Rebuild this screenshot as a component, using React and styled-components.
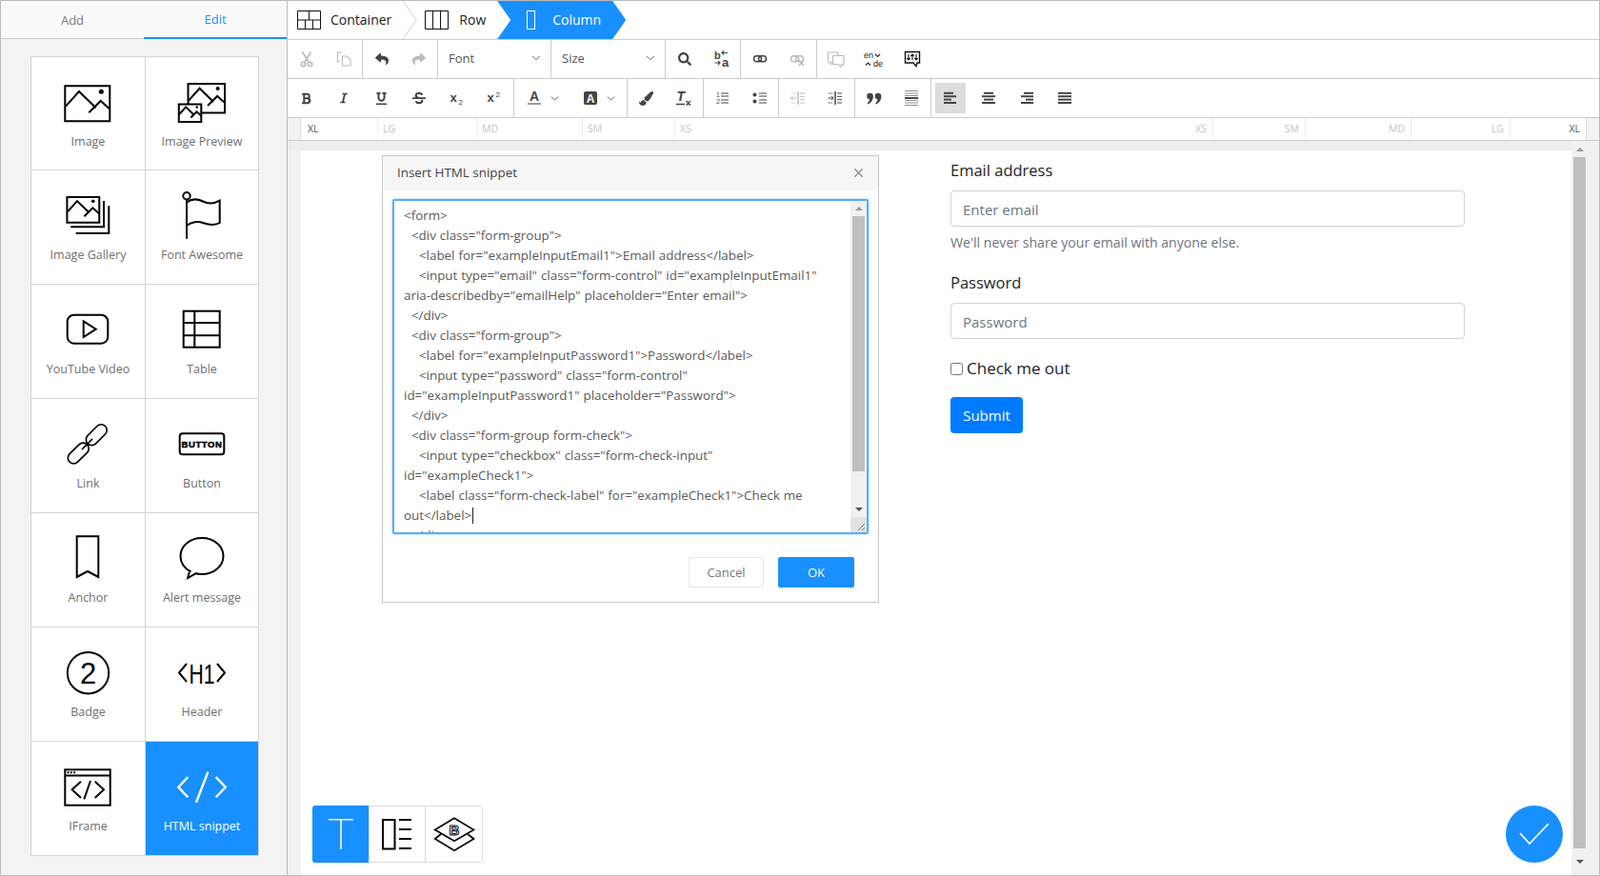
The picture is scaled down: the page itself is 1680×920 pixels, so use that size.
import React from 'react'
import styled, { createGlobalStyle } from 'styled-components'
import {
    FaBold, FaItalic, FaUnderline, FaStrikethrough,
    FaPaintBrush, FaReply, FaShare, FaSearch
} from 'react-icons/fa'
import { ChevronDown, X } from 'lucide-react'

const FONT = '"Open Sans", "Noto Sans", "Liberation Sans", sans-serif'
const BLUE = '#1890ff'

const GlobalStyle = createGlobalStyle`
    html, body { margin: 0; padding: 0; background: #fff; }
    * { box-sizing: border-box; }
    body { font-family: ${FONT}; color: #333; }
`

/* ---------- sidebar icons, 60x60 ---------- */

const Glyph = ({ children, color = '#000', width = 2 }) => (
    <svg width="60" height="60" viewBox="0 0 60 60" fill="none" stroke={color} strokeWidth={width}>
        {children}
    </svg>
)

// picture with mountains, drawn in a 49x39 box so it can be scaled for the other image icons
const Picture = ({ x, y, s }) => (
    <g transform={`translate(${x} ${y}) scale(${s})`}>
        <rect x="1" y="1" width="47" height="37" fill="#fff" stroke="#000" strokeWidth="2" vectorEffect="non-scaling-stroke" />
        <path d="M1.7 22.4 L15.7 6.7 L33.4 24 M26 29 L38.4 16.7 L48.4 25.7" stroke="#000" strokeWidth="2" vectorEffect="non-scaling-stroke" />
        <circle cx="39" cy="7" r="2.5" fill="#000" stroke="none" />
    </g>
)

const icons = {
    image: <Glyph><Picture x={6.3} y={11.3} s={1} /></Glyph>,
    preview: <Glyph><Picture x={14.7} y={9.3} s={0.82} /><Picture x={5.3} y={31} s={0.5} /></Glyph>,
    gallery: (
        <Glyph>
            <path d="M13.3 41.3H48V14M18.7 48H53.3V19.3" />
            <Picture x={8.7} y={9.3} s={0.72} />
        </Glyph>
    ),
    flag: (
        <Glyph>
            <circle cx="14" cy="8.7" r="3.7" />
            <path d="M14 12.7V53.7M14 15.5C20 11 26 12 31 14.5S43 17 48.7 13.7V37C43 40.5 37 39 31 37S20 36 14 40" />
        </Glyph>
    ),
    youtube: (
        <Glyph>
            <rect x="9.7" y="13.7" width="42.6" height="30" rx="7" />
            <path d="M26.7 20.3L39.7 28.7L26.7 37Z" />
        </Glyph>
    ),
    table: (
        <Glyph>
            <rect x="10.7" y="9.7" width="38" height="38" />
            <path d="M22.3 9.7V47.7M10.7 22H48.7M10.7 35.3H48.7" />
        </Glyph>
    ),
    link: (
        <Glyph width={1.7}>
            <rect x="27.3" y="13.7" width="26" height="12" rx="6" transform="rotate(-45 40.3 19.7)" />
            <rect x="8.3" y="33" width="26" height="12" rx="6" transform="rotate(-45 21.3 39)" />
            <path d="M25 35L36 24" />
        </Glyph>
    ),
    button: (
        <Glyph>
            <rect x="6.7" y="18.3" width="46.6" height="22" rx="3" />
            <text x="30" y="33" textAnchor="middle" fontFamily="'Liberation Sans', sans-serif" fontSize="9.5" fontWeight="700" letterSpacing="0.6" fill="#000" stroke="#000" strokeWidth="0.5">BUTTON</text>
        </Glyph>
    ),
    anchor: <Glyph><path d="M19.7 6.3H42.3V49L31 43L19.7 49Z" /></Glyph>,
    alert: (
        <Glyph>
            <path d="M18.5 43.5C11.8 40 7.5 34 7.5 27C7.5 16.5 17.5 8 30 8S52.5 16.5 52.5 27S42.5 46 30 46C27.8 46 25.8 45.8 23.8 45.2L15.2 50L16.6 44" />
        </Glyph>
    ),
    badge: (
        <Glyph>
            <circle cx="31.5" cy="29.7" r="21.7" />
            <text x="31.5" y="41" textAnchor="middle" fontFamily="'Liberation Sans', sans-serif" fontSize="31" fill="#000" stroke="none">2</text>
        </Glyph>
    ),
    header: (
        <Glyph>
            <path d="M14 20L6 29.5L14 39M46 20L54 29.5L46 39" />
            <text x="30" y="40.5" textAnchor="middle" fontFamily="'Liberation Sans', sans-serif" fontSize="30" textLength="27" lengthAdjust="spacingAndGlyphs" fill="#000" stroke="none">H1</text>
        </Glyph>
    ),
    iframe: (
        <Glyph>
            <rect x="7.3" y="11.3" width="47.4" height="37.4" />
            <path d="M7.3 17.5H54.7M24 23.7L14.7 32.3L24 41M34 23L27.3 42.3M38.7 23.7L48 32.3L38.7 41" />
            <path d="M9.5 14.3H11.5M12.8 14.3H14.8M16.1 14.3H18.1" />
        </Glyph>
    ),
    snippet: (
        <Glyph color="#fff" width={2.4}>
            <path d="M15.3 19L5.3 29.7L15.3 40.3M36.3 13.7L24 45.7M44.7 19L54.7 29.7L44.7 40.3" />
        </Glyph>
    )
}

const blocks = [
    ['Image', 'image'], ['Image Preview', 'preview'],
    ['Image Gallery', 'gallery'], ['Font Awesome', 'flag'],
    ['YouTube Video', 'youtube'], ['Table', 'table'],
    ['Link', 'link'], ['Button', 'button'],
    ['Anchor', 'anchor'], ['Alert message', 'alert'],
    ['Badge', 'badge'], ['Header', 'header'],
    ['IFrame', 'iframe'], ['HTML snippet', 'snippet']
]

/* ---------- toolbar icons, 20x20 ---------- */

const Tool = ({ children, fill = 'none', stroke = 'currentColor', width = 1.4 }) => (
    <svg width="20" height="20" viewBox="0 0 20 20" fill={fill} stroke={stroke} strokeWidth={width}>{children}</svg>
)

const smallText = { fontFamily: "'Liberation Sans', sans-serif", fill: 'currentColor', stroke: 'none' }

const CutIcon = () => (
    <Tool width={1.6}>
        <path d="M5.5 2.5L12 13M14.5 2.5L8 13" />
        <circle cx="6.5" cy="15.5" r="2.2" /><circle cx="13.5" cy="15.5" r="2.2" />
    </Tool>
)
const CopyIcon = () => (
    <Tool width={1.1}>
        <path d="M6 12.5H3.5V3H8M8.5 7H13L17 10.5V17H8.5Z" />
    </Tool>
)
const ReplaceIcon = () => (
    <Tool width={1.1}>
        <text x="2" y="9.5" fontSize="11" fontWeight="700" style={smallText}>b</text>
        <text x="10" y="18" fontSize="13" fontWeight="700" style={smallText}>a</text>
        <path d="M10 3.5H16M12 1.5L10 3.5L12 5.5M2.5 14H8M6 12L8 14L6 16" />
    </Tool>
)
const LinkIcon = ({ off }) => (
    <Tool width={1.5}>
        <rect x="3.5" y="6.8" width="8" height="6" rx="3" />
        <rect x="8.5" y="6.8" width="8" height="6" rx="3" />
        {off && <path d="M12 11L17 17M17 11L12 17" />}
    </Tool>
)
const CommentsIcon = () => (
    <Tool width={1.1}>
        <path d="M7 13H5L4.5 15.5L3 13H1.5V3H12V6.5" />
        <path d="M6.5 6.5H18V15.5H15.5L15 18.5L12.5 15.5H6.5Z" />
    </Tool>
)
const TranslateIcon = () => (
    <svg width="24" height="20" viewBox="0 0 24 20" fill="none" stroke="#222" strokeWidth="1.1">
        <text x="1" y="9" fontSize="9" fill="#222" stroke="none" fontFamily="'Liberation Sans', sans-serif">en</text>
        <text x="11" y="17.5" fontSize="9" fill="#222" stroke="none" fontFamily="'Liberation Sans', sans-serif">de</text>
        <path d="M13 5L15.5 7.5L18 5M3 16.5L5.5 14L8 16.5" />
    </svg>
)
const WidgetIcon = () => (
    <Tool stroke="#111" width={1.4}>
        <path d="M2.5 2.5H17.5V14H15L14 17.5L11 14H2.5Z" />
        <path d="M6 5V11M4.3 9.2L6 11L7.7 9.2M10 11V5M8.3 6.8L10 5L11.7 6.8M14 5V11M12.3 9.2L14 11L15.7 9.2" strokeWidth="1.1" />
    </Tool>
)
const ScriptIcon = ({ up }) => (
    <Tool>
        <text x="2.5" y="14" fontSize="13" fontWeight="700" style={smallText}>x</text>
        <text x="11.5" y={up ? 9 : 17} fontSize="8" style={smallText}>2</text>
    </Tool>
)
const FontColorIcon = () => (
    <Tool>
        <text x="10" y="13" textAnchor="middle" fontSize="14" fontWeight="700" style={smallText}>A</text>
        <rect x="3" y="15" width="14" height="2" fill="#999" stroke="none" />
    </Tool>
)
const BackColorIcon = () => (
    <svg width="20" height="20" viewBox="0 0 20 20">
        <rect x="3" y="3" width="14" height="14" rx="2" fill="currentColor" />
        <text x="10" y="15" textAnchor="middle" fontSize="12" fontWeight="700" fontFamily="'Liberation Sans', sans-serif" fill="#fff">A</text>
    </svg>
)
const ClearIcon = () => (
    <Tool>
        <text x="2.5" y="13" fontSize="14" fontWeight="700" fontStyle="italic" style={smallText}>T</text>
        <path d="M2 16.5H11M12.5 13L17 17.5M17 13L12.5 17.5" />
    </Tool>
)
const OlIcon = () => (
    <Tool width={1}>
        <text x="3" y="9" fontSize="7" style={smallText}>1</text>
        <text x="3" y="16" fontSize="7" style={smallText}>2</text>
        <path d="M8 5H16M8 8H16M8 12H16M8 15H16" />
    </Tool>
)
const UlIcon = () => (
    <Tool width={1}>
        <circle cx="4.5" cy="6.5" r="2" fill="currentColor" stroke="none" />
        <circle cx="4.5" cy="13.5" r="2" fill="currentColor" stroke="none" />
        <path d="M9 5H17M9 8H17M9 12H17M9 15H17" />
    </Tool>
)
const IndentIcon = ({ flip }) => (
    <Tool width={1}>
        <path d={flip ? 'M8 10H2.5M4.5 8L2.5 10L4.5 12' : 'M2.5 10H8M6 8L8 10L6 12'} />
        <path d="M3 5H7M3 15H7" strokeDasharray="1.5 1" />
        <path d="M10 3V17" strokeWidth="1.5" />
        <path d="M12 5H17M12 8.3H17M12 11.7H17M12 15H17" />
    </Tool>
)
const QuoteIcon = () => (
    <svg width="20" height="20" viewBox="0 0 20 20" fill="currentColor">
        {[5.5, 14].map(cx => (
            <g key={cx}>
                <circle cx={cx} cy="8" r="3.3" />
                <path d={`M${cx + 3.3} 8C${cx + 3.3} 12 ${cx + 1} 15.5 ${cx - 2.5} 16.5L${cx - 2.8} 15.2C${cx - 1} 14 ${cx - 0.5} 12 ${cx - 0.5} 10Z`} />
            </g>
        ))}
    </svg>
)
const RuleIcon = () => (
    <Tool width={1}>
        <path d="M3 2.5H17M3 5H17M3 7.5H17M3 12.5H17M3 15H17M3 17.5H17" opacity="0.6" />
        <path d="M3 10H17" strokeWidth="2" />
    </Tool>
)
const AlignIcon = ({ lines }) => (
    <svg width="20" height="20" viewBox="0 0 20 20" fill="currentColor">
        {lines.map(([x, w], i) => <rect key={i} x={x} y={3.8 + i * 3.4} width={w} height="2" />)}
    </svg>
)

/* ---------- layout ---------- */

const Page = styled.div`
    width: 1680px;
    height: 920px;
    border: 1px solid #bbb;
    display: flex;
    overflow: hidden;
    background: #fff;
`

const Sidebar = styled.aside`
    width: 301px;
    flex: none;
    border-right: 1px solid #bbb;
    background: #f3f3f3;
`

const SideTabs = styled.div`
    display: flex;
    height: 40px;
    background: #f9f9f9;
    border-bottom: 1px solid #ccc;
`

const SideTab = styled.div`
    flex: 1;
    display: flex;
    align-items: center;
    justify-content: center;
    font-size: 13px;
    color: ${p => (p.$active ? BLUE : '#777')};
    height: ${p => (p.$active ? '40px' : '39px')};
    border-bottom: ${p => (p.$active ? `2px solid ${BLUE}` : 'none')};
`

const BlockGrid = styled.div`
    display: grid;
    grid-template-columns: 120px 119px;
    grid-template-rows: 119px repeat(6, 120px);
    width: 240px;
    margin: 18px 0 0 31px;
    border-top: 1px solid #d4d4d4;
    border-left: 1px solid #d4d4d4;
    background: #fff;
`

const BlockCell = styled.div`
    display: flex;
    flex-direction: column;
    align-items: center;
    padding-top: 18px;
    border-right: 1px solid #d4d4d4;
    border-bottom: 1px solid #d4d4d4;
    background: ${p => (p.$active ? BLUE : '#fff')};
    svg { display: block; flex: none; }
    &:nth-child(odd) svg { margin-left: -3px; }
`

const BlockLabel = styled.span`
    margin-top: 2px;
    font-size: 12.5px;
    line-height: 18px;
    color: ${p => (p.$active ? '#fff' : '#6f6f6f')};
`

const Main = styled.main`
    flex: 1;
    min-width: 0;
    display: flex;
    flex-direction: column;
`

const Breadcrumbs = styled.nav`
    height: 41px;
    flex: none;
    display: flex;
    align-items: center;
    padding-left: 10px;
    border-bottom: 1px solid #ccc;
`

const CrumbText = styled.span`
    font-size: 14px;
    line-height: 40px;
    margin-left: ${p => p.$gap}px;
    color: ${p => (p.$light ? '#fff' : '#222')};
`

const CrumbArrow = styled.svg`
    flex: none;
    margin: 0 8px 0 11px;
`

const ActiveCrumb = styled.div`
    width: 135px;
    height: 40px;
    margin-left: 12px;
    padding-left: 31px;
    display: flex;
    align-items: center;
    background: ${BLUE};
    clip-path: polygon(0 0, 121px 0, 135px 50%, 121px 100%, 0 100%, 14px 50%);
`

const ToolRow = styled.div`
    height: 41px;
    flex: none;
    display: flex;
    border-bottom: 1px solid #ccc;
`

const ToolGroup = styled.div`
    width: ${p => p.$w}px;
    flex: none;
    display: flex;
    align-items: center;
    border-right: ${p => (p.$open ? 'none' : '1px solid #ccc')};
`

const ToolButton = styled.div`
    flex: 1;
    height: 40px;
    display: flex;
    align-items: center;
    justify-content: center;
    gap: 5px;
    color: ${p => (p.$off ? '#bbb' : '#444')};
    font-size: 14px;
`

const ActiveBox = styled.div`
    width: 32px;
    height: 32px;
    display: flex;
    align-items: center;
    justify-content: center;
    background: #ddd;
    color: #444;
`

const SelectBox = styled.div`
    flex: 1;
    height: 40px;
    display: flex;
    align-items: center;
    justify-content: space-between;
    padding: 0 8px 2px 11px;
    font-size: 13px;
    color: #555;
`

const Ruler = styled.div`
    height: 24px;
    flex: none;
    display: flex;
    background: #fff;
    border-bottom: 1px solid #ccc;
`

const RulerGutter = styled.div`
    width: ${p => p.$w}px;
    flex: none;
    background: #f3f3f3;
    border-left: ${p => (p.$right ? '1px solid #ddd' : 'none')};
    border-right: ${p => (p.$right ? 'none' : '1px solid #ddd')};
`

const RulerMark = styled.div`
    width: ${p => p.$w}px;
    flex: ${p => (p.$w ? 'none' : '1')};
    padding: ${p => (p.$end ? '0 6px' : `0 5px 0 ${p.$dark ? 7 : 5}px`)};
    font-size: 10.5px;
    line-height: 23px;
    text-align: ${p => (p.$end ? 'right' : 'left')};
    color: ${p => (p.$dark ? '#555' : '#c4c4c4')};
    border-right: ${p => (p.$end || p.$plain ? 'none' : '1px solid #eee')};
    border-left: ${p => (p.$end && !p.$plain ? '1px solid #eee' : 'none')};
`

const TopStrip = styled.div`
    height: 10px;
    flex: none;
    background: #eee;
`

const Workspace = styled.div`
    flex: 1;
    min-height: 0;
    display: flex;
`

const Gutter = styled.div`
    width: 14px;
    flex: none;
    background: #f1f1f1;
`

const Canvas = styled.div`
    flex: 1;
    min-width: 0;
    position: relative;
    padding: 9px 0 0 682px;
    background: #fff;
`

const Track = styled.div`
    width: ${p => p.$w}px;
    flex: none;
    margin-top: -10px;
    display: flex;
    flex-direction: column;
    background: #f1f1f1;
    padding-left: 2px;
`

const Thumb = styled.div`
    width: ${p => p.$w}px;
    flex: 1;
    background: #bfbfbf;
`

const ArrowCap = styled.div`
    width: ${p => p.$w}px;
    height: ${p => p.$h}px;
    flex: none;
    display: flex;
    align-items: center;
    justify-content: center;
    &::after {
        content: '';
        border-left: 4px solid transparent;
        border-right: 4px solid transparent;
        ${p => (p.$down ? 'border-top: 4px solid #555;' : 'border-bottom: 4px solid #999;')}
    }
`

const FormColumn = styled.form`
    width: 540px;
`

const FieldLabel = styled.label`
    display: block;
    font-size: 16.5px;
    line-height: 24px;
    margin-bottom: 9px;
    color: #212529;
`

const FieldInput = styled.input`
    display: block;
    width: 100%;
    height: 38px;
    padding: 1px 12px 0;
    border: 1px solid #ced4da;
    border-radius: 4px;
    font: 15px ${FONT};
    outline: none;
    &::placeholder { color: #6c757d; opacity: 1; }
`

const FieldHelp = styled.small`
    display: block;
    font-size: 14.1px;
    line-height: 20px;
    margin-top: 7px;
    color: #6c757d;
`

const FieldGroup = styled.div`
    margin-bottom: ${p => p.$mb}px;
`

const CheckRow = styled.label`
    display: flex;
    align-items: center;
    gap: 4px;
    font-size: 17px;
    line-height: 24px;
    margin-bottom: 18px;
    color: #212529;
    input { width: 13px; height: 13px; margin: 0; accent-color: #007bff; }
`

const SubmitButton = styled.button`
    width: 76px;
    height: 38px;
    padding: 0;
    border: none;
    border-radius: 4px;
    background: #007bff;
    color: #fff;
    font: 15px ${FONT};
`

/* things that lie over the canvas */

const Dialog = styled.div`
    position: absolute;
    left: 85px;
    top: 5px;
    width: 522px;
    height: 470px;
    background: #fff;
    border: 1px solid #c8c8c8;
`

const DialogHead = styled.div`
    height: 36px;
    display: flex;
    align-items: center;
    justify-content: space-between;
    padding: 0 13px 2px 15px;
    background: #f6f6f6;
    font-size: 13.4px;
    color: #444;
`

const CodeBox = styled.div`
    display: flex;
    height: 352px;
    margin: 9px 10px 0 10px;
    border: 2px solid #5aadf8;
    border-radius: 2px;
    box-shadow: 0 0 3px rgba(24, 144, 255, 0.45);
    overflow: hidden;
`

const CodeText = styled.div`
    flex: 1;
    min-width: 0;
    padding: 5px 0 0 10px;
    white-space: pre;
    font-size: 13.4px;
    word-spacing: 0.5px;
    line-height: 21px;
    color: #5a5a5a;
`

const Caret = styled.span`
    display: inline-block;
    width: 1px;
    height: 17px;
    margin-left: 1px;
    vertical-align: -4px;
    background: #222;
`

const CodeScroll = styled.div`
    width: 17px;
    flex: none;
    display: flex;
    flex-direction: column;
    background: #f1f1f1;
    padding-left: 2px;
`

const CodeThumb = styled.div`
    width: 13px;
    height: 268px;
    flex: none;
    background: #bfbfbf;
`

const CodeSpacer = styled.div`
    flex: 1;
`

const Grip = styled.svg`
    display: block;
    margin-left: -2px;
    flex: none;
    background: #e2e2e2;
`

const DialogFoot = styled.div`
    display: flex;
    justify-content: flex-end;
    gap: 15px;
    padding: 24px 25px 0 0;
`

const DialogButton = styled.div`
    width: ${p => p.$w}px;
    height: 32px;
    display: flex;
    align-items: center;
    justify-content: center;
    font-size: 13px;
    border-radius: 2px;
    border: 1px solid ${p => (p.$primary ? BLUE : '#e6e6e6')};
    background: ${p => (p.$primary ? BLUE : '#fff')};
    color: ${p => (p.$primary ? '#fff' : '#777')};
`

const ModeTabs = styled.div`
    position: absolute;
    left: 12px;
    bottom: 13px;
    display: flex;
    height: 60px;
    border: 1px solid #ddd;
    border-radius: 3px;
    background: #fff;
`

const ModeTab = styled.div`
    width: ${p => p.$w}px;
    display: flex;
    align-items: center;
    justify-content: center;
    background: ${p => (p.$active ? BLUE : '#fff')};
    border-right: ${p => (p.$last ? 'none' : '1px solid #ddd')};
    border-radius: ${p => (p.$active ? '3px 0 0 3px' : '0')};
    margin: ${p => (p.$active ? '-1px 0 -1px -1px' : '0')};
`

const DoneButton = styled.div`
    position: absolute;
    right: 9px;
    bottom: 13px;
    width: 60px;
    height: 60px;
    border-radius: 50%;
    background: ${BLUE};
    display: flex;
    align-items: center;
    justify-content: center;
`

const codeLines = [
    '<form>',
    '  <div class="form-group">',
    '    <label for="exampleInputEmail1">Email address</label>',
    '    <input type="email" class="form-control" id="exampleInputEmail1"',
    'aria-describedby="emailHelp" placeholder="Enter email">',
    '  </div>',
    '  <div class="form-group">',
    '    <label for="exampleInputPassword1">Password</label>',
    '    <input type="password" class="form-control"',
    'id="exampleInputPassword1" placeholder="Password">',
    '  </div>',
    '  <div class="form-group form-check">',
    '    <input type="checkbox" class="form-check-input"',
    'id="exampleCheck1">',
    '    <label class="form-check-label" for="exampleCheck1">Check me',
    'out</label>',
    '  </div>'
]

const rulerLeft = [['XL', 81, true], ['LG', 104], ['MD', 111], ['SM', 97]]
const rulerRight = [['SM', 97], ['MD', 111], ['LG', 104], ['XL', 80, true]]

function App() {
    return (
        <Page>
            <GlobalStyle />
            <Sidebar>
                <SideTabs>
                    <SideTab>Add</SideTab>
                    <SideTab $active>Edit</SideTab>
                </SideTabs>
                <BlockGrid>
                    {blocks.map(([label, icon]) => (
                        <BlockCell key={label} $active={icon === 'snippet'}>
                            {icons[icon]}
                            <BlockLabel $active={icon === 'snippet'}>{label}</BlockLabel>
                        </BlockCell>
                    ))}
                </BlockGrid>
            </Sidebar>
            <Main>
                <Breadcrumbs>
                    <svg width="25" height="20" viewBox="0 0 25 20" fill="none" stroke="#111">
                        <path d="M.5.5H24.5V19.5H.5ZM.5 10H24.5M12.5.5V10M8.5 10V19.5M16.5 10V19.5" />
                    </svg>
                    <CrumbText $gap={10}>Container</CrumbText>
                    <CrumbArrow width="16" height="40" viewBox="0 0 16 40" fill="none" stroke="#d0d0d0">
                        <path d="M1 0L15 20L1 40" />
                    </CrumbArrow>
                    <svg width="25" height="20" viewBox="0 0 25 20" fill="none" stroke="#111">
                        <path d="M.5.5H24.5V19.5H.5ZM8.5.5V19.5M16.5.5V19.5" />
                    </svg>
                    <CrumbText $gap={11}>Row</CrumbText>
                    <ActiveCrumb>
                        <svg width="9" height="20" viewBox="0 0 9 20" fill="none" stroke="#fff">
                            <rect x=".5" y=".5" width="8" height="19" />
                        </svg>
                        <CrumbText $gap={18} $light>Column</CrumbText>
                    </ActiveCrumb>
                </Breadcrumbs>

                <ToolRow>
                    <ToolGroup $w={79}>
                        <ToolButton $off><CutIcon /></ToolButton>
                        <ToolButton $off><CopyIcon /></ToolButton>
                    </ToolGroup>
                    <ToolGroup $w={79}>
                        <ToolButton><FaReply size={14} /></ToolButton>
                        <ToolButton $off><FaShare size={14} /></ToolButton>
                    </ToolGroup>
                    <ToolGroup $w={119}>
                        <SelectBox>Font<ChevronDown size={14} strokeWidth={1.6} /></SelectBox>
                    </ToolGroup>
                    <ToolGroup $w={120}>
                        <SelectBox>Size<ChevronDown size={14} strokeWidth={1.6} /></SelectBox>
                    </ToolGroup>
                    <ToolGroup $w={79}>
                        <ToolButton><FaSearch size={14} /></ToolButton>
                        <ToolButton><ReplaceIcon /></ToolButton>
                    </ToolGroup>
                    <ToolGroup $w={80}>
                        <ToolButton><LinkIcon /></ToolButton>
                        <ToolButton $off><LinkIcon off /></ToolButton>
                    </ToolGroup>
                    <ToolGroup $w={120} $open>
                        <ToolButton $off><CommentsIcon /></ToolButton>
                        <ToolButton><TranslateIcon /></ToolButton>
                        <ToolButton><WidgetIcon /></ToolButton>
                    </ToolGroup>
                </ToolRow>

                <ToolRow>
                    <ToolGroup $w={238}>
                        <ToolButton><FaBold size={13} /></ToolButton>
                        <ToolButton><FaItalic size={12} /></ToolButton>
                        <ToolButton><FaUnderline size={13} /></ToolButton>
                        <ToolButton><FaStrikethrough size={14} /></ToolButton>
                        <ToolButton><ScriptIcon /></ToolButton>
                        <ToolButton><ScriptIcon up /></ToolButton>
                    </ToolGroup>
                    <ToolGroup $w={119}>
                        <ToolButton><FontColorIcon /><ChevronDown size={13} strokeWidth={1.6} /></ToolButton>
                        <ToolButton><BackColorIcon /><ChevronDown size={13} strokeWidth={1.6} /></ToolButton>
                    </ToolGroup>
                    <ToolGroup $w={80}>
                        <ToolButton><FaPaintBrush size={15} /></ToolButton>
                        <ToolButton><ClearIcon /></ToolButton>
                    </ToolGroup>
                    <ToolGroup $w={79}>
                        <ToolButton><OlIcon /></ToolButton>
                        <ToolButton><UlIcon /></ToolButton>
                    </ToolGroup>
                    <ToolGroup $w={80}>
                        <ToolButton $off><IndentIcon flip /></ToolButton>
                        <ToolButton><IndentIcon /></ToolButton>
                    </ToolGroup>
                    <ToolGroup $w={80}>
                        <ToolButton><QuoteIcon /></ToolButton>
                        <ToolButton><RuleIcon /></ToolButton>
                    </ToolGroup>
                    <ToolGroup $w={160} $open>
                        <ToolButton><ActiveBox><AlignIcon lines={[[3, 10], [3, 13], [3, 8], [3, 13]]} /></ActiveBox></ToolButton>
                        <ToolButton><AlignIcon lines={[[5, 10], [3, 14], [5, 10], [3, 14]]} /></ToolButton>
                        <ToolButton><AlignIcon lines={[[7, 10], [4, 13], [9, 8], [4, 13]]} /></ToolButton>
                        <ToolButton><AlignIcon lines={[[3, 14], [3, 14], [3, 14], [3, 14]]} /></ToolButton>
                    </ToolGroup>
                </ToolRow>

                <Ruler>
                    <RulerGutter $w={14} />
                    {rulerLeft.map(([t, w, dark]) => <RulerMark key={t} $w={w} $dark={dark}>{t}</RulerMark>)}
                    <RulerMark $plain>XS</RulerMark>
                    <RulerMark $end $plain>XS</RulerMark>
                    {rulerRight.map(([t, w, dark]) => <RulerMark key={t} $w={w} $dark={dark} $end>{t}</RulerMark>)}
                    <RulerGutter $w={14} $right />
                </Ruler>

                <TopStrip />

                <Workspace>
                    <Gutter />
                    <Canvas>
                        <FormColumn>
                            <FieldGroup $mb={20}>
                                <FieldLabel>Email address</FieldLabel>
                                <FieldInput type="email" placeholder="Enter email" readOnly />
                                <FieldHelp>We'll never share your email with anyone else.</FieldHelp>
                            </FieldGroup>
                            <FieldGroup $mb={19}>
                                <FieldLabel>Password</FieldLabel>
                                <FieldInput type="password" placeholder="Password" readOnly />
                            </FieldGroup>
                            <CheckRow><input type="checkbox" readOnly />Check me out</CheckRow>
                            <SubmitButton type="button">Submit</SubmitButton>
                        </FormColumn>

                        <Dialog>
                            <DialogHead>
                                Insert HTML snippet
                                <X size={15} strokeWidth={2.2} color="#888" />
                            </DialogHead>
                            <CodeBox>
                                <CodeText>
                                    {codeLines.map((line, i) => (
                                        <div key={i}>{line}{i === 15 && <Caret />}</div>
                                    ))}
                                </CodeText>
                                <CodeScroll>
                                    <ArrowCap $w={13} $h={16} />
                                    <CodeThumb />
                                    <CodeSpacer />
                                    <ArrowCap $w={13} $h={16} $down />
                                    <Grip width="17" height="16" viewBox="0 0 17 16" fill="none" stroke="#777">
                                        <path d="M8 14L15 7M12 14L15 11" />
                                    </Grip>
                                </CodeScroll>
                            </CodeBox>
                            <DialogFoot>
                                <DialogButton $w={79}>Cancel</DialogButton>
                                <DialogButton $w={80} $primary>OK</DialogButton>
                            </DialogFoot>
                        </Dialog>

                        <ModeTabs>
                            <ModeTab $w={60} $active>
                                <svg width="40" height="40" viewBox="0 0 40 40" fill="none" stroke="#fff" strokeWidth="1.6">
                                    <path d="M7 4.7H33M20 4.7V36" />
                                </svg>
                            </ModeTab>
                            <ModeTab $w={59}>
                                <svg width="40" height="40" viewBox="0 0 40 40" fill="none" stroke="#000" strokeWidth="2">
                                    <path d="M5 5H17.5V35.5H5ZM22 5H35M22 15H35M22 25H35M22 35H35" />
                                </svg>
                            </ModeTab>
                            <ModeTab $w={59} $last>
                                <svg width="44" height="40" viewBox="0 0 44 40" fill="none" stroke="#000" strokeWidth="1.7">
                                    <path d="M22 3.3L42.5 15.5L22 27.3L1.7 15.5Z" />
                                    <path d="M8 20L1.7 25L22 37.3L42.5 25L36 20" />
                                    <text x="22" y="21" textAnchor="middle" fontSize="15" fontWeight="700" fontFamily="'Liberation Sans', sans-serif" fill="none" stroke="#000" strokeWidth="1">B</text>
                                </svg>
                            </ModeTab>
                        </ModeTabs>

                        <DoneButton>
                            <svg width="36" height="28" viewBox="0 0 36 28" fill="none" stroke="#fff" strokeWidth="1.8">
                                <path d="M3 13L13 24L33 3" />
                            </svg>
                        </DoneButton>
                    </Canvas>
                    <Track $w={29}>
                        <ArrowCap $w={13} $h={17} />
                        <Thumb $w={13} />
                        <ArrowCap $w={13} $h={28} $down />
                    </Track>
                </Workspace>
            </Main>
        </Page>
    )
}

export default App
